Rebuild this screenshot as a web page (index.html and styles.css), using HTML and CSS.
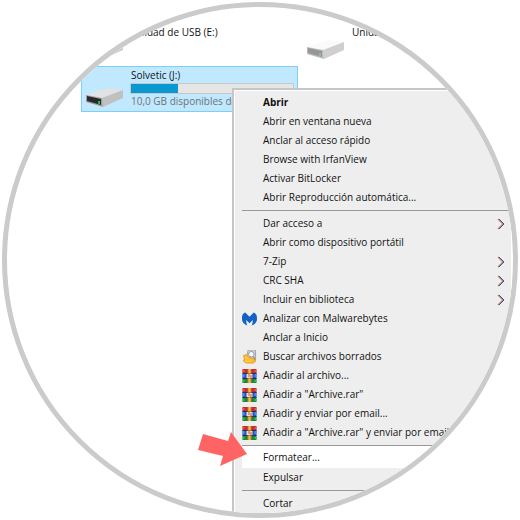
FILE: index.html
```html
<!DOCTYPE html>
<html lang="es">
<head>
<meta charset="utf-8">
<meta name="viewport" content="width=device-width, initial-scale=1">
<title>Este equipo</title>
<link rel="stylesheet" href="styles.css">
</head>
<body>
<svg class="defs" aria-hidden="true">
  <symbol id="drive" viewBox="0 0 37 20">
    <path d="M0 7 22 0 37 2 16 10z" fill="var(--drive-top)"/>
    <path d="M16 10 37 2V10L17 19z" fill="var(--drive-side)"/>
    <path d="M0 7 16 10 17 19 0 14z" fill="var(--drive-edge)"/>
    <path d="M1 8 15 11V17L1 13z" fill="var(--drive-front)"/>
    <path d="M12 13h2v3h-2z" fill="var(--drive-led)"/>
  </symbol>
  <symbol id="malware" viewBox="0 0 14 12">
    <path d="M3 0C0 1 0 4 0 6c0 3 2 5 5 6-1-2-1-3-1-5l3 3 3-3c0 2 0 3-1 5 3-1 5-3 5-6 0-2 0-5-3-6L7 4z" fill="#1261c4"/>
  </symbol>
  <symbol id="search" viewBox="0 0 15 15">
    <path d="M6 0h8v11H4z" fill="#d5d8dc" stroke="#8b8f94" stroke-width=".8"/>
    <circle cx="9.500" cy="4.500" r="3" fill="#f4f6f8" stroke="#8d949b"/>
    <path d="M12 7l1 3" stroke="#777" stroke-width="1"/>
    <path d="M1 6l3-1 3 3 5 1 2 3-2 2H4l-3-2 1-3z" fill="#ffbc2e" stroke="#e88a12" stroke-width=".8"/>
    <path d="M3 7l3 3M3 12h6" stroke="#ffe17a" stroke-width="1"/>
  </symbol>
  <symbol id="rar" viewBox="0 0 14 14">
    <path d="M0 0h14v4H0z" fill="#c52b35"/>
    <path d="M0 4h14v5H0z" fill="#2354c9"/>
    <path d="M0 9h14v5H0z" fill="#178a3d"/>
    <path d="M0 4h14v1H0zM0 9h14v1H0z" fill="#26334b"/>
    <path d="M0 1h2v2H0zM12 1h2v2h-2z" fill="#e9584e"/>
    <path d="M0 5h2v3H0zM12 5h2v3h-2z" fill="#4b8cec"/>
    <path d="M0 11h2v2H0zM12 11h2v2h-2z" fill="#37bd56"/>
    <path d="M5 0h4v14H5z" fill="#c4762a"/>
    <path d="M6 0h2v4H6zM6 10h2v4H6z" fill="#f4c344"/>
    <path d="M4 5h6v4H4z" fill="#e5ddd2"/>
    <path d="M6 4h1v4H6zM8 6h1v4H8z" fill="#c55a38"/>
  </symbol>
  <symbol id="chevron" viewBox="0 0 8 12">
    <path d="M1 1l5 5-5 5" fill="none" stroke="#c08070" stroke-width="1.400"/>
    <path d="M2 1l5 5-5 5" fill="none" stroke="#3c5591" stroke-width="1"/>
  </symbol>
</svg>

<main class="lens">
  <section class="drives" aria-label="Unidades">
    <article class="tile">
      <svg class="drive shadowed"><use href="#drive"/></svg>
      <div class="info"><p>Unidad de USB (E:)</p></div>
    </article>
    <article class="tile">
      <svg class="drive faded"><use href="#drive"/></svg>
      <div class="info"><p>Unidad</p></div>
    </article>
    <article class="tile selected">
      <svg class="drive"><use href="#drive"/></svg>
      <div class="info">
        <p>Solvetic (J:)</p>
        <div class="bar"><div class="used" style="width:29%"></div></div>
        <p class="free">10,0 GB disponibles de</p>
      </div>
    </article>
  </section>

  <nav class="menu" aria-label="Menú contextual">
    <div class="group">
      <button class="item default">Abrir</button>
      <button class="item">Abrir en ventana nueva</button>
      <button class="item">Anclar al acceso rápido</button>
      <button class="item">Browse with IrfanView</button>
      <button class="item">Activar BitLocker</button>
      <button class="item">Abrir Reproducción automática...</button>
    </div>
    <div class="group">
      <button class="item">Dar acceso a<svg class="more"><use href="#chevron"/></svg></button>
      <button class="item">Abrir como dispositivo portátil</button>
      <button class="item">7-Zip<svg class="more"><use href="#chevron"/></svg></button>
      <button class="item">CRC SHA<svg class="more"><use href="#chevron"/></svg></button>
      <button class="item">Incluir en biblioteca<svg class="more"><use href="#chevron"/></svg></button>
      <button class="item with-icon"><svg class="icon"><use href="#malware"/></svg>Analizar con Malwarebytes</button>
      <button class="item">Anclar a Inicio</button>
      <button class="item with-icon"><svg class="icon"><use href="#search"/></svg>Buscar archivos borrados</button>
      <button class="item with-icon"><svg class="icon"><use href="#rar"/></svg>Añadir al archivo...</button>
      <button class="item with-icon"><svg class="icon"><use href="#rar"/></svg>Añadir a "Archive.rar"</button>
      <button class="item with-icon"><svg class="icon"><use href="#rar"/></svg>Añadir y enviar por email...</button>
      <button class="item with-icon"><svg class="icon"><use href="#rar"/></svg>Añadir a "Archive.rar" y enviar por email</button>
    </div>
    <div class="group actions">
      <button class="item current">Formatear...</button>
      <button class="item">Expulsar</button>
    </div>
    <div class="group">
      <button class="item">Cortar</button>
    </div>
  </nav>

  <svg class="pointer" viewBox="0 0 49 35" aria-hidden="true">
    <path d="M5 2 30 9 33 0 49 22 22 34 25 24 0 18z" fill="#ff6464"/>
  </svg>
</main>
</body>
</html>
```
FILE: styles.css
```css
* { box-sizing: border-box; }

body {
  margin: 0;
  padding: 2px;
  background: #fff;
  color: #111;
  font: 10px/15px "Open Sans", "Noto Sans", sans-serif;
}

p { margin: 0; }

.defs {
  position: absolute;
  width: 0;
  height: 0;
}

.lens {
  position: relative;
  aspect-ratio: 1;
  overflow: hidden;
  border: 5px solid #cbcbcb;
  border-radius: 50%;
  background: #fff;
}

/* Drive tiles */
.drives {
  display: grid;
  grid-template-columns: 217px 217px;
  column-gap: 4px;
  padding: 16px 0 0 74px;
}

.tile {
  display: flex;
  gap: 7px;
  height: 43px;
  padding: 2px 4px 0 5px;
  white-space: nowrap;
}

.tile.selected {
  height: 46px;
  border: 1px solid #7fcdfb;
  background: #c0e8ff;
  padding: 1px 3px 0 4px;
}

.info { flex: 1; }

.info p { padding-left: 1px; }

.drive {
  --drive-top: #e2e2e2;
  --drive-side: #c0c0c0;
  --drive-edge: #a0a0a0;
  --drive-front: #292929;
  --drive-led: #18bf4b;
  flex: none;
  width: 37px;
  height: 20px;
  margin-top: 20px;
}

.tile:not(.selected) .drive { margin-top: 15px; }

.drive.faded {
  --drive-top: #fafafa;
  --drive-side: #cfcfcf;
  --drive-edge: #bbb;
  --drive-front: #969696;
  --drive-led: #79c5a0;
}

.drive.shadowed {
  --drive-top: #fff;
  --drive-side: #cbcbcb;
  --drive-edge: #cbcbcb;
  --drive-front: #cbcbcb;
  --drive-led: #cbcbcb;
}

.bar {
  height: 11px;
  border: 1px solid #c8c8c8;
  background: #e5e5e5;
}

.used {
  height: 100%;
  background: #0999d0;
}

.free { color: #6b7378; }

/* Context menu laid over the drives */
.menu {
  position: absolute;
  top: 81px;
  left: 225px;
  right: 2px;
  bottom: 0;
  padding: 3px 1px 0 2px;
  border: solid #c6c6c6;
  border-width: 2px 0 0 2px;
  background: #eee;
  box-shadow: inset 1px 1px #fff, 1px 0 #fff;
}

.group {
  margin-left: 6px;
  padding-bottom: 3px;
}

.group + .group {
  padding-top: 3px;
  border-top: 1px solid #999;
}

.group.actions { padding-top: 0; }

.item {
  display: flex;
  align-items: center;
  width: 100%;
  height: 19px;
  padding: 0 5px 0 21px;
  border: 0;
  background: none;
  color: inherit;
  font: inherit;
  text-align: left;
  white-space: nowrap;
}

.item.default { font-weight: 700; }

.item.with-icon {
  gap: 6px;
  padding-left: 0;
}

.item.current {
  height: 22px;
  background: #fff;
}

.icon {
  flex: none;
  width: 15px;
  height: 14px;
}

.more {
  width: 8px;
  height: 12px;
  margin-left: auto;
}

.pointer {
  position: absolute;
  top: 425px;
  left: 191px;
  width: 49px;
  height: 35px;
}
```
